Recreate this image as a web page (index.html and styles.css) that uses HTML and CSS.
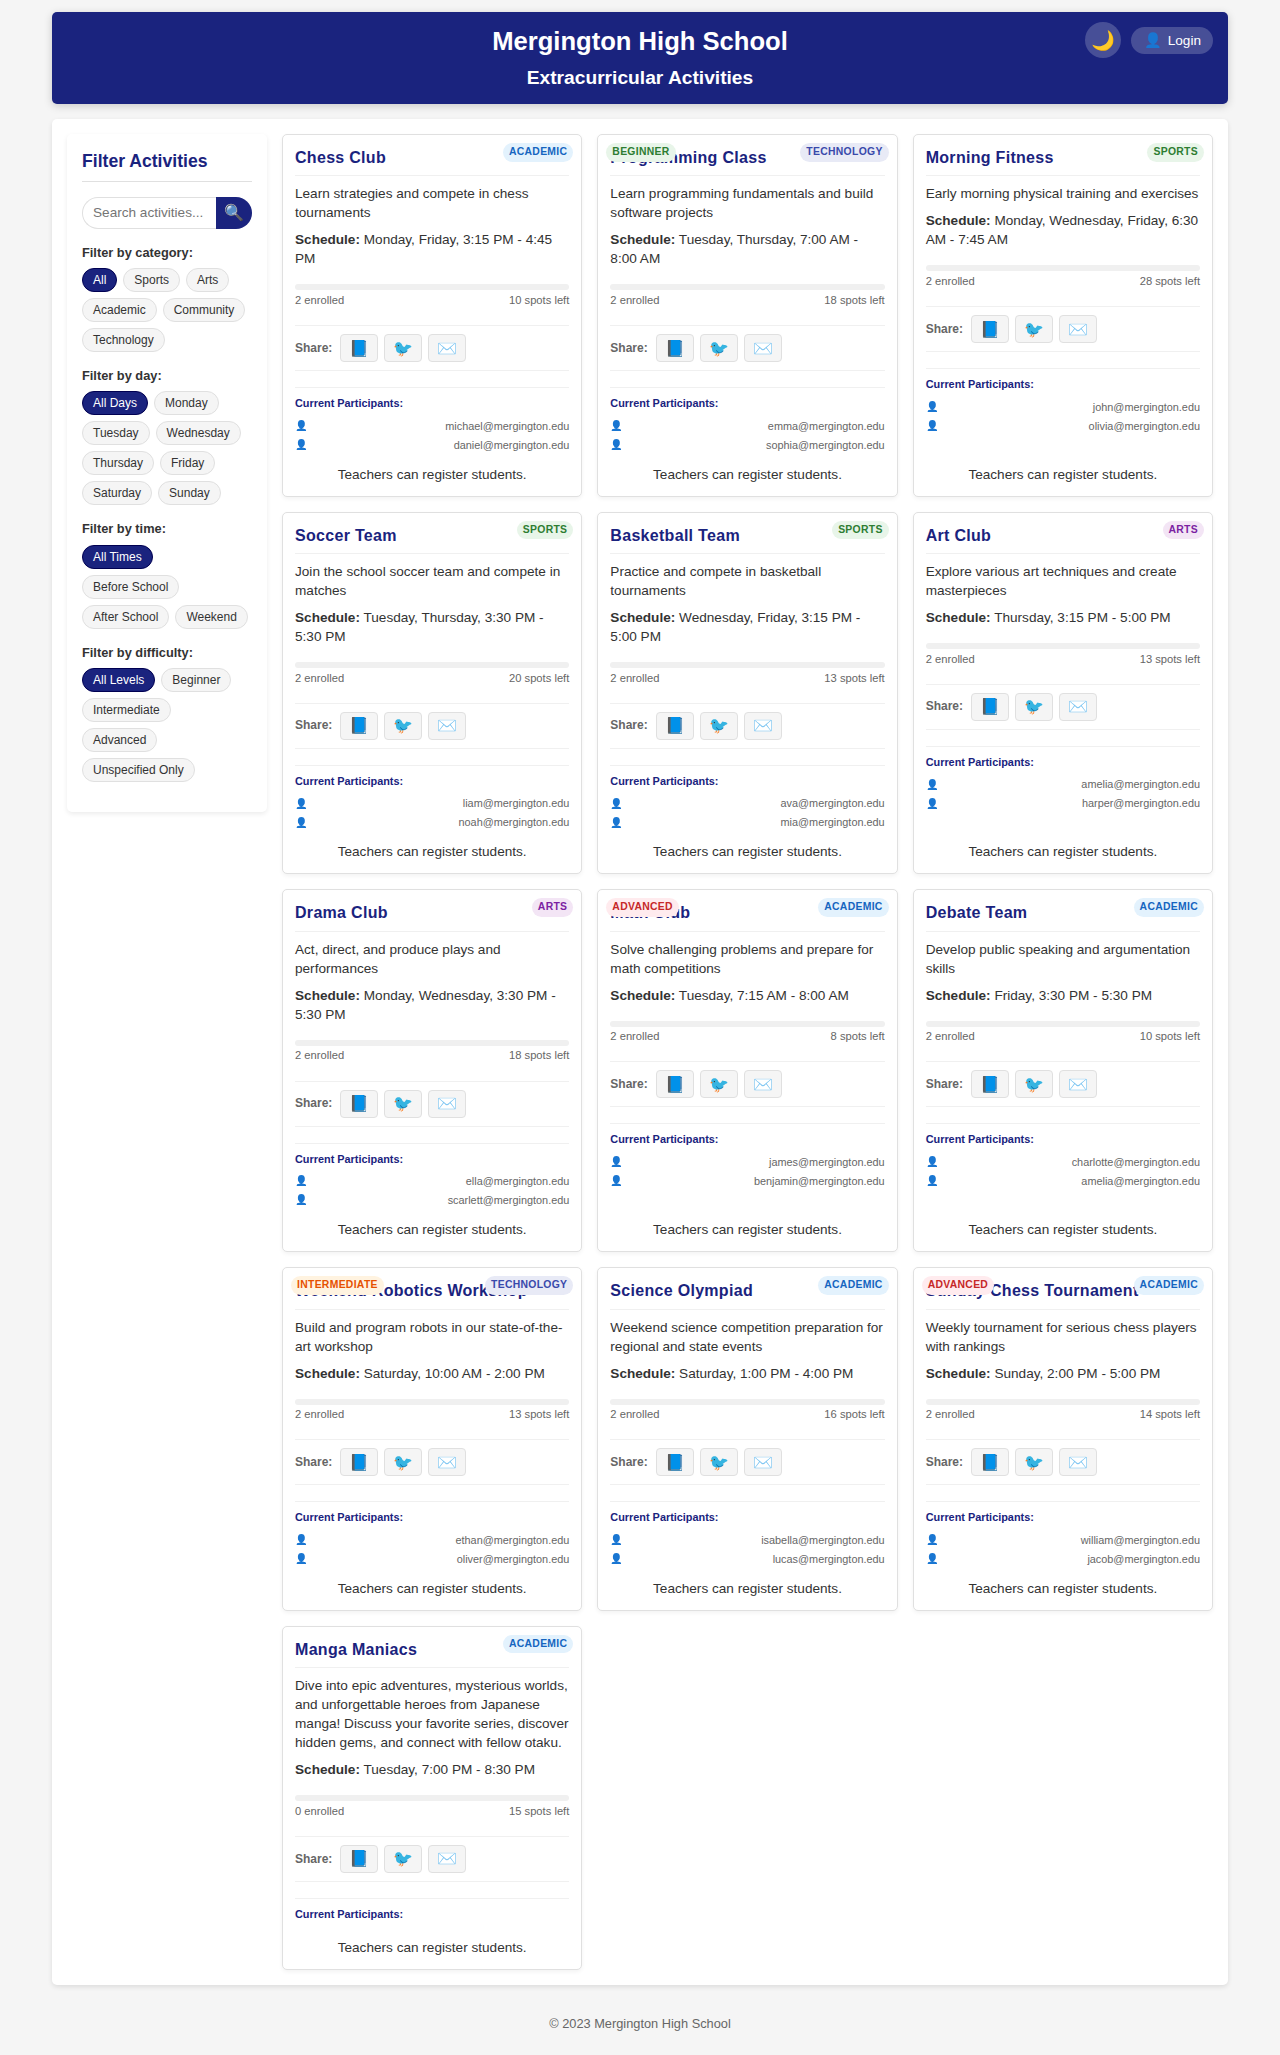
FILE: index.html
```html
<!DOCTYPE html>
<html lang="en">
<head>
  <meta charset="UTF-8">
  <meta name="viewport" content="width=device-width, initial-scale=1.0">
  <title>Mergington High School</title>
  <link rel="stylesheet" href="styles.css">
</head>
<body>
  <header class="site-header">
    <h1>Mergington High School</h1>
    <h2>Extracurricular Activities</h2>
    <div class="user-controls">
      <button class="theme-toggle" type="button">🌙</button>
      <button class="login-button" type="button"><span class="login-icon">👤</span><span>Login</span></button>
    </div>
  </header>

  <main class="main-layout">
    <aside class="filters">
      <h3>Filter Activities</h3>
      <div class="search-box">
        <input type="text" placeholder="Search activities...">
        <button type="button">🔍</button>
      </div>
      <section class="filter-group">
        <h4>Filter by category:</h4>
        <div class="chips">
          <button class="chip active">All</button>
          <button class="chip">Sports</button>
          <button class="chip">Arts</button>
          <button class="chip">Academic</button>
          <button class="chip">Community</button>
          <button class="chip">Technology</button>
        </div>
      </section>
      <section class="filter-group">
        <h4>Filter by day:</h4>
        <div class="chips">
          <button class="chip active">All Days</button>
          <button class="chip">Monday</button>
          <button class="chip">Tuesday</button>
          <button class="chip">Wednesday</button>
          <button class="chip">Thursday</button>
          <button class="chip">Friday</button>
          <button class="chip">Saturday</button>
          <button class="chip">Sunday</button>
        </div>
      </section>
      <section class="filter-group">
        <h4>Filter by time:</h4>
        <div class="chips">
          <button class="chip active">All Times</button>
          <button class="chip">Before School</button>
          <button class="chip">After School</button>
          <button class="chip">Weekend</button>
        </div>
      </section>
      <section class="filter-group">
        <h4>Filter by difficulty:</h4>
        <div class="chips">
          <button class="chip active">All Levels</button>
          <button class="chip">Beginner</button>
          <button class="chip">Intermediate</button>
          <button class="chip">Advanced</button>
          <button class="chip">Unspecified Only</button>
        </div>
      </section>
    </aside>
    <div class="activities" id="activities"></div>
  </main>

  <footer class="site-footer">© 2023 Mergington High School</footer>
  <script src="app.js"></script>
</body>
</html>
```
FILE: styles.css
```css
* {
  box-sizing: border-box;
  margin: 0;
  padding: 0;
}

body {
  max-width: 1200px;
  margin: 0 auto;
  padding: 12px;
  background: #f5f5f5;
  color: #333;
  font-family: "Liberation Sans", Arial, sans-serif;
  font-size: 13.6px;
  line-height: 1.4;
}

button,
input {
  font-family: inherit;
}

.site-header {
  position: relative;
  height: 92px;
  margin-bottom: 15px;
  padding-top: 12px;
  background: #1a237e;
  color: #fff;
  text-align: center;
  border-radius: 5px;
  box-shadow: 0 2px 8px rgba(0, 0, 0, 0.18);
}

.site-header h1 {
  margin-bottom: 5px;
  font-size: 25.6px;
}

.site-header h2 {
  font-size: 19.2px;
}

.user-controls {
  position: absolute;
  top: 10px;
  right: 15px;
  display: flex;
  align-items: center;
  gap: 10px;
}

.user-controls button {
  border: none;
  background: rgba(255, 255, 255, 0.2);
  color: #fff;
}

.theme-toggle {
  width: 36px;
  height: 36px;
  border-radius: 50%;
  font-size: 19.2px;
}

.login-button {
  display: flex;
  align-items: center;
  justify-content: flex-end;
  gap: 6px;
  width: 82px;
  height: 27px;
  padding: 0 12px;
  border-radius: 20px;
  font-size: 13.6px;
}

.login-icon {
  font-size: 14.4px;
  line-height: 1;
}

.main-layout {
  display: flex;
  align-items: flex-start;
  gap: 15px;
  padding: 15px;
  background: #fff;
  border-radius: 5px;
  box-shadow: 0 2px 5px rgba(0, 0, 0, 0.1);
}

.filters {
  flex: 0 0 200px;
  min-width: 0;
  padding: 15px;
  border-radius: 5px;
  box-shadow: 0 2px 5px rgba(0, 0, 0, 0.08);
}

.filters h3 {
  margin-bottom: 15px;
  padding-bottom: 7px;
  border-bottom: 1px solid #e0e0e0;
  color: #1a237e;
  font-size: 17.6px;
}

.search-box {
  display: flex;
  height: 32px;
  margin-bottom: 15px;
}

.search-box input {
  flex: 1;
  width: 100%;
  min-width: 0;
  padding: 0 10px;
  border: 1px solid #e0e0e0;
  border-right: none;
  border-radius: 20px 0 0 20px;
  font-size: 13.6px;
}

.search-box button {
  width: 36px;
  border: none;
  border-radius: 0 20px 20px 0;
  background: #1a237e;
  font-size: 16px;
}

.filter-group {
  margin-bottom: 15px;
}

.filter-group h4 {
  margin-bottom: 6.4px;
  font-size: 12.8px;
}

.chips {
  display: flex;
  flex-wrap: wrap;
  gap: 6px;
}

.chip {
  height: 24px;
  padding: 0 10px;
  border: 1px solid #e0e0e0;
  border-radius: 15px;
  background: #f5f5f5;
  color: #333;
  font-size: 12px;
}

.chip.active {
  border-color: #000051;
  background: #1a237e;
  color: #fff;
}

.activities {
  flex: 1;
  display: grid;
  grid-template-columns: repeat(3, 1fr);
  gap: 15px;
}

.card {
  position: relative;
  display: flex;
  flex-direction: column;
  padding: 12px;
  border: 1px solid #e0e0e0;
  border-radius: 5px;
  background: #fff;
  box-shadow: 0 2px 4px rgba(0, 0, 0, 0.05);
}

.card h4 {
  margin-bottom: 8px;
  padding-bottom: 6px;
  border-bottom: 1px solid #f0f0f0;
  color: #1a237e;
  font-size: 16px;
  letter-spacing: 0.3px;
}

.card p {
  margin-bottom: 8px;
}

.badge {
  position: absolute;
  top: 8px;
  padding: 2px 6px;
  border-radius: 10px;
  font-size: 10.4px;
  font-weight: bold;
  letter-spacing: 0.3px;
  text-transform: uppercase;
}

.badge-category { right: 8px; }
.badge-level { left: 8px; }

.academic { background: #e3f2fd; color: #1565c0; }
.sports, .beginner { background: #e8f5e9; color: #2e7d32; }
.technology { background: #e8eaf6; color: #3949ab; }
.arts { background: #f3e5f5; color: #7b1fa2; }
.intermediate { background: #fff3e0; color: #e65100; }
.advanced { background: #ffebee; color: #c62828; }

.capacity {
  margin: 7.9px 0 16.5px;
}

.capacity-bar {
  height: 6px;
  margin-bottom: 2.5px;
  border-radius: 3px;
  background: #f0f0f0;
}

.capacity-text {
  display: flex;
  justify-content: space-between;
  color: #666;
  font-size: 11.2px;
}

.share {
  display: flex;
  align-items: center;
  gap: 6px;
  margin-bottom: 16px;
  padding: 8px 0;
  border-top: 1px solid #f0f0f0;
  border-bottom: 1px solid #f0f0f0;
}

.share-label {
  margin-right: 2px;
  color: #666;
  font-size: 12px;
  font-weight: bold;
}

.share button {
  width: 38px;
  height: 28px;
  border: 1px solid #e0e0e0;
  border-radius: 4px;
  background: #f5f5f5;
  font-size: 16px;
}

.participants {
  padding-top: 8px;
  border-top: 1px solid #f0f0f0;
}

.participants h5 {
  margin-bottom: 5.4px;
  color: #1a237e;
  font-size: 10.88px;
}

.participants ul {
  list-style: none;
}

.participants li {
  display: flex;
  align-items: center;
  justify-content: space-between;
  height: 19px;
  color: #666;
  font-size: 10.88px;
}

.participants li::before {
  content: "👤";
  font-size: 10.2px;
}

.card-note {
  margin-top: auto;
  padding-top: 10px;
  text-align: center;
}

.site-footer {
  margin-top: 20px;
  padding: 10px;
  color: #666;
  font-size: 12.8px;
  text-align: center;
}
```
FILE: app.js
```js
const activities = [
  ["Chess Club", "academic", "", "Learn strategies and compete in chess tournaments", "Monday, Friday, 3:15 PM - 4:45 PM", 10, ["michael", "daniel"]],
  ["Programming Class", "technology", "beginner", "Learn programming fundamentals and build software projects", "Tuesday, Thursday, 7:00 AM - 8:00 AM", 18, ["emma", "sophia"]],
  ["Morning Fitness", "sports", "", "Early morning physical training and exercises", "Monday, Wednesday, Friday, 6:30 AM - 7:45 AM", 28, ["john", "olivia"]],
  ["Soccer Team", "sports", "", "Join the school soccer team and compete in matches", "Tuesday, Thursday, 3:30 PM - 5:30 PM", 20, ["liam", "noah"]],
  ["Basketball Team", "sports", "", "Practice and compete in basketball tournaments", "Wednesday, Friday, 3:15 PM - 5:00 PM", 13, ["ava", "mia"]],
  ["Art Club", "arts", "", "Explore various art techniques and create masterpieces", "Thursday, 3:15 PM - 5:00 PM", 13, ["amelia", "harper"]],
  ["Drama Club", "arts", "", "Act, direct, and produce plays and performances", "Monday, Wednesday, 3:30 PM - 5:30 PM", 18, ["ella", "scarlett"]],
  ["Math Club", "academic", "advanced", "Solve challenging problems and prepare for math competitions", "Tuesday, 7:15 AM - 8:00 AM", 8, ["james", "benjamin"]],
  ["Debate Team", "academic", "", "Develop public speaking and argumentation skills", "Friday, 3:30 PM - 5:30 PM", 10, ["charlotte", "amelia"]],
  ["Weekend Robotics Workshop", "technology", "intermediate", "Build and program robots in our state-of-the-art workshop", "Saturday, 10:00 AM - 2:00 PM", 13, ["ethan", "oliver"]],
  ["Science Olympiad", "academic", "", "Weekend science competition preparation for regional and state events", "Saturday, 1:00 PM - 4:00 PM", 16, ["isabella", "lucas"]],
  ["Sunday Chess Tournament", "academic", "advanced", "Weekly tournament for serious chess players with rankings", "Sunday, 2:00 PM - 5:00 PM", 14, ["william", "jacob"]],
  ["Manga Maniacs", "academic", "", "Dive into epic adventures, mysterious worlds, and unforgettable heroes from Japanese manga! Discuss your favorite series, discover hidden gems, and connect with fellow otaku.", "Tuesday, 7:00 PM - 8:30 PM", 15, []]
];

document.getElementById("activities").innerHTML = activities.map(
  ([name, category, level, description, schedule, spots, people]) => `
  <article class="card">
    <h4>${name}</h4>
    ${level ? `<span class="badge badge-level ${level}">${level}</span>` : ""}
    <span class="badge badge-category ${category}">${category}</span>
    <p>${description}</p>
    <p><strong>Schedule:</strong> ${schedule}</p>
    <div class="capacity">
      <div class="capacity-bar"></div>
      <div class="capacity-text"><span>${people.length} enrolled</span><span>${spots} spots left</span></div>
    </div>
    <div class="share">
      <span class="share-label">Share:</span>
      <button type="button">📘</button>
      <button type="button">🐦</button>
      <button type="button">✉️</button>
    </div>
    <div class="participants">
      <h5>Current Participants:</h5>
      <ul>${people.map((person) => `<li>${person}@mergington.edu</li>`).join("")}</ul>
    </div>
    <div class="card-note">Teachers can register students.</div>
  </article>`
).join("");
```
